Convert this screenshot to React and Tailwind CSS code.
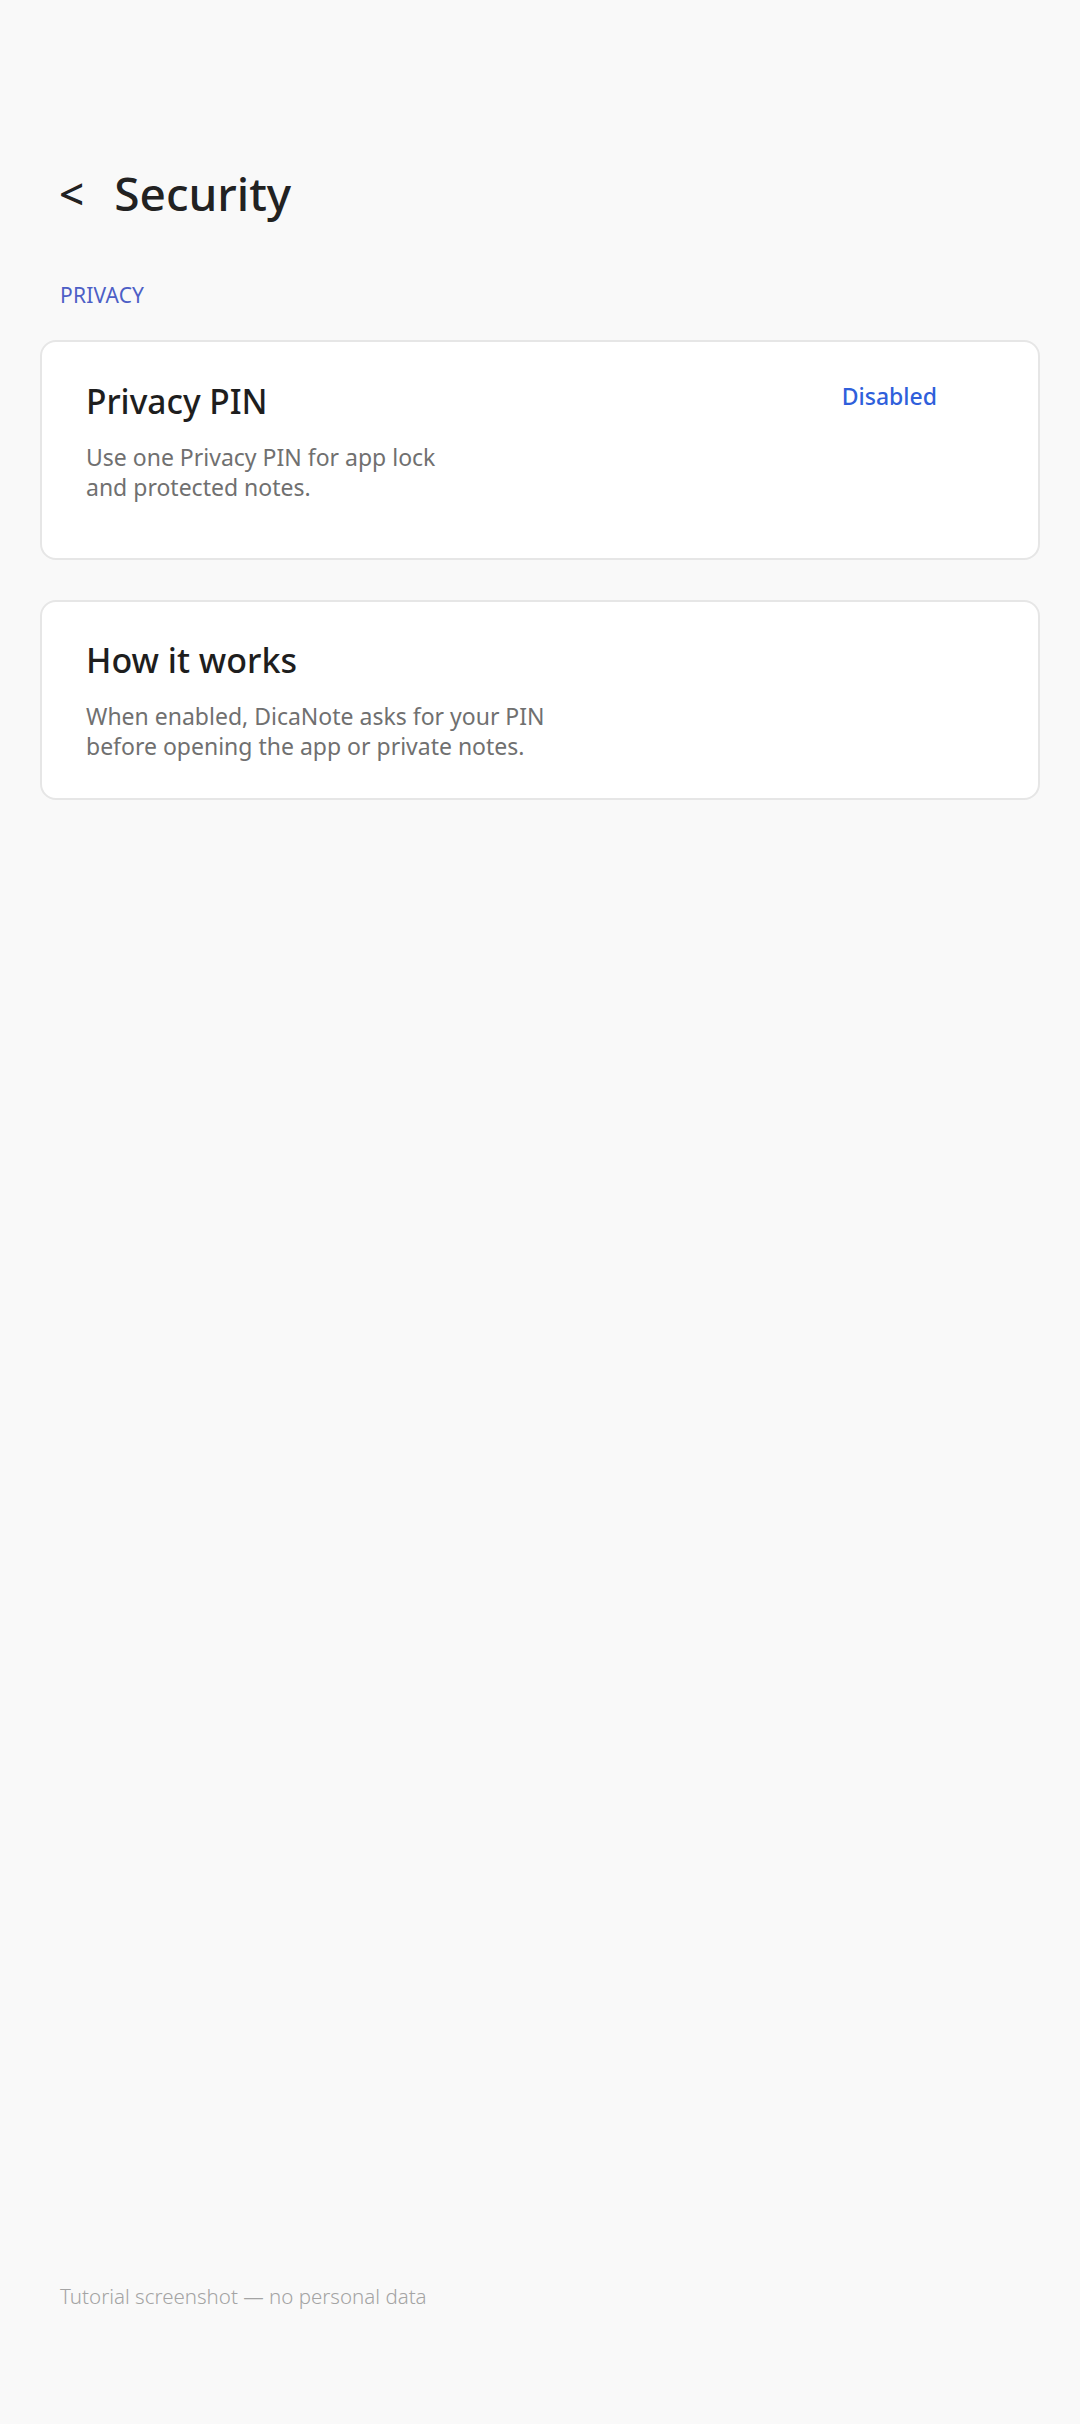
export default function App() {
  const font = { fontFamily: '"Noto Sans", "Open Sans", sans-serif' };
  return (
    <div className="min-h-[2424px] w-[1080px] bg-[#f9f9f9] flex flex-col" style={font}>
      <header className="pt-[161px] pl-[59px] flex items-center h-[225px]">
        <span className="text-[44px] leading-[64px] font-medium text-[#222222] mr-[30px]">&lt;</span>
        <h1 className="text-[46px] leading-[64px] font-medium text-[#222222]">Security</h1>
      </header>

      <div className="mt-[56px] pl-[60px] text-[21px] leading-[28px] text-[#4d5fc6] tracking-[0.2px]">
        PRIVACY
      </div>

      <section className="mt-[31px] mx-[40px] flex flex-col gap-[40px]">
        <div className="bg-white border-2 border-[#e6e6e6] rounded-[16px] pt-[37px] pb-[56px] pl-[44px] pr-[101px]">
          <div className="flex items-start justify-between">
            <h2 className="text-[33.5px] leading-[44px] font-medium text-[#1e1e1e]">Privacy PIN</h2>
            <span className="text-[23px] leading-[34px] font-medium text-[#2f5fdb]">Disabled</span>
          </div>
          <p className="mt-[19px] text-[23px] leading-[30px] text-[#707070]">
            Use one Privacy PIN for app lock
            <br />
            and protected notes.
          </p>
        </div>

        <div className="bg-white border-2 border-[#e6e6e6] rounded-[16px] pt-[36px] pb-[37px] pl-[44px] pr-[44px]">
          <h2 className="text-[34px] leading-[44px] font-medium text-[#1e1e1e]">How it works</h2>
          <p className="mt-[19px] text-[23px] leading-[30px] text-[#707070]">
            When enabled, DicaNote asks for your PIN
            <br />
            before opening the app or private notes.
          </p>
        </div>
      </section>

      <footer className="mt-auto pl-[60px] pb-[113px] text-[20.5px] leading-[30px] font-light text-[#a4a4a4]">
        Tutorial screenshot — no personal data
      </footer>
    </div>
  );
}
